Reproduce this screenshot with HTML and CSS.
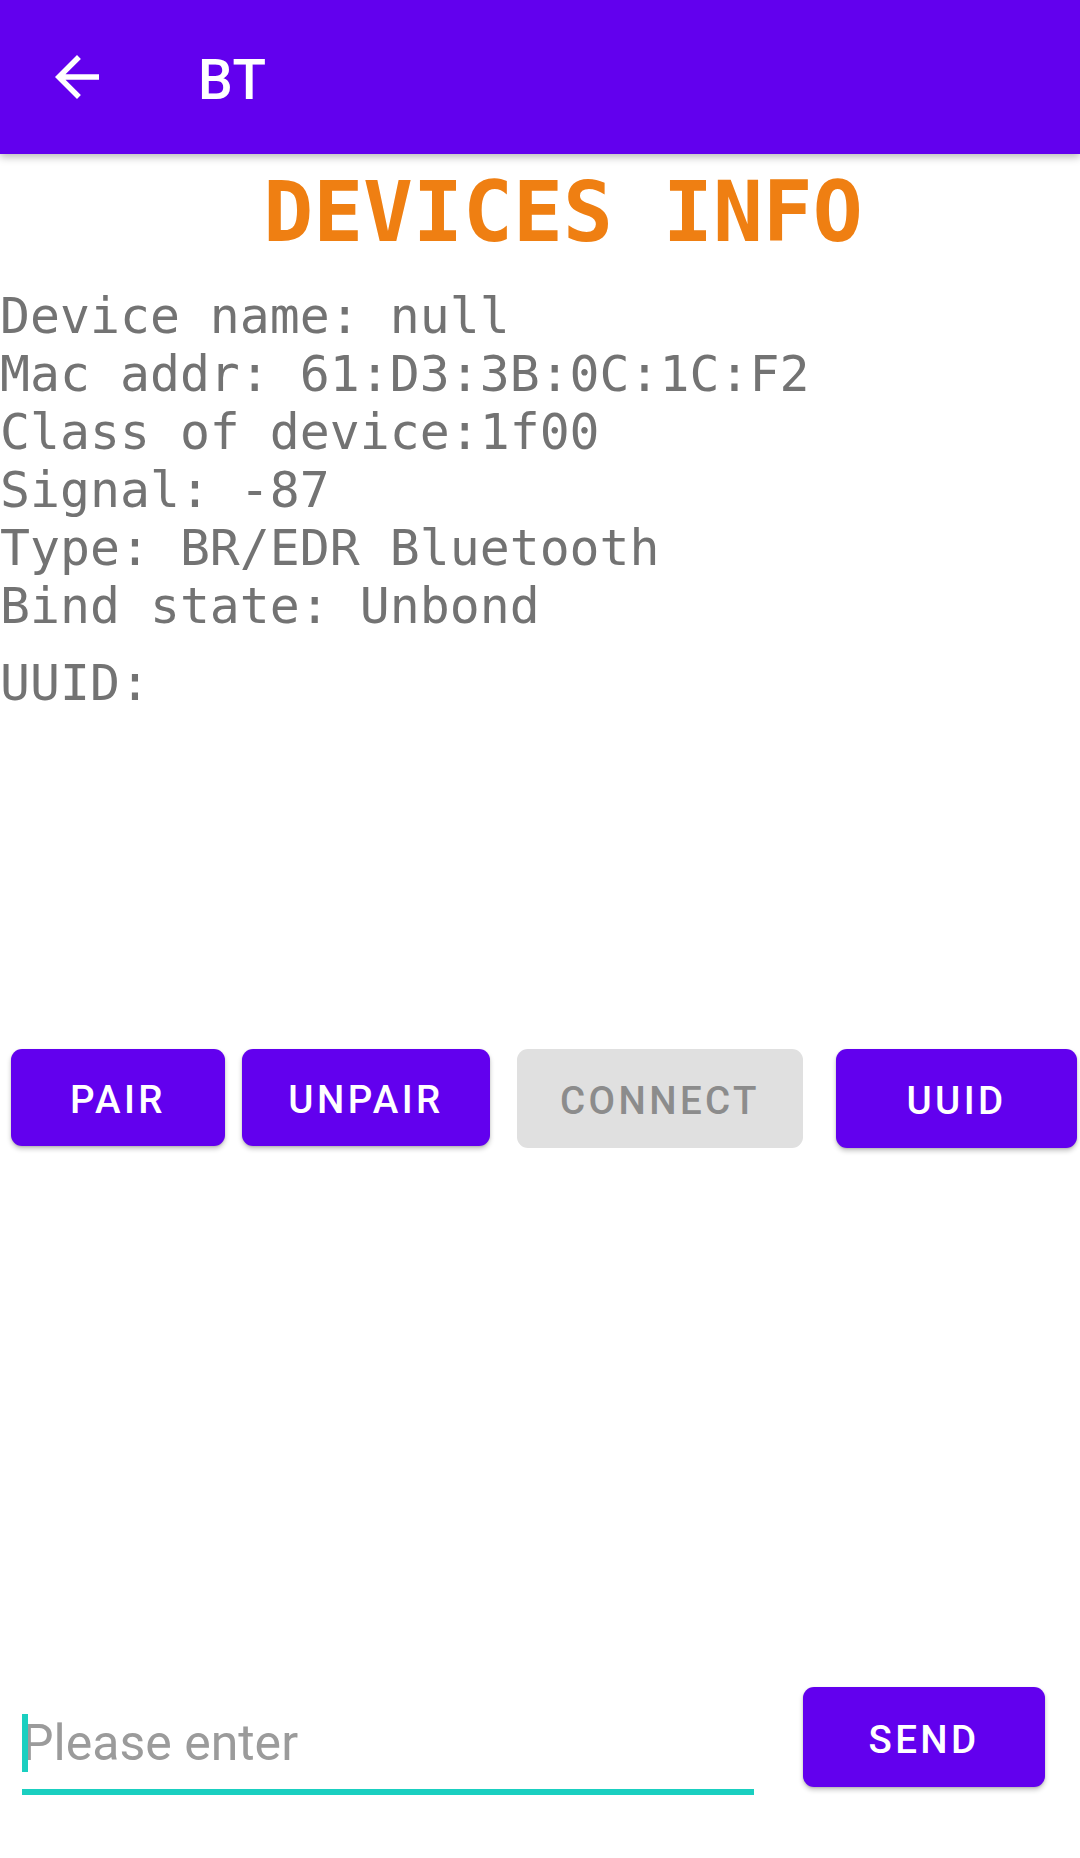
FILE: index.html
```html
<!DOCTYPE html>
<html lang="en">
<head>
<meta charset="utf-8">
<title>BT</title>
<link rel="stylesheet" href="styles.css">
</head>
<body>
<header class="appbar">
  <span class="nav-icon">
    <svg viewBox="0 0 24 24" width="66" height="66"><path fill="#fff" d="M20 11H7.83l5.59-5.59L12 4l-8 8 8 8 1.41-1.41L7.83 13H20v-2z"/></svg>
  </span>
  <span class="appbar-title">BT</span>
</header>
<main class="content">
  <h1 class="heading">DEVICES INFO</h1>
  <div class="info">
    <div class="line">Device name: null</div>
    <div class="line">Mac addr: 61:D3:3B:0C:1C:F2</div>
    <div class="line">Class of device:1f00</div>
    <div class="line">Signal: -87</div>
    <div class="line">Type: BR/EDR Bluetooth</div>
    <div class="line">Bind state: Unbond</div>
  </div>
  <div class="uuid">UUID:</div>
  <div class="actions">
    <button class="btn btn-pair">PAIR</button>
    <button class="btn btn-unpair">UNPAIR</button>
    <button class="btn btn-connect" disabled>CONNECT</button>
    <button class="btn btn-uuid">UUID</button>
  </div>
  <div class="composer">
    <div class="field">
      <span class="cursor"></span>
      <span class="hint">Please enter</span>
    </div>
    <button class="btn btn-send">SEND</button>
  </div>
</main>
</body>
</html>
```
FILE: styles.css
```css
html, body {
  margin: 0;
  padding: 0;
  background: #ffffff;
}
body {
  width: 1080px;
  height: 1858px;
  overflow: hidden;
  font-family: Roboto, "Noto Sans", sans-serif;
}
.appbar {
  position: relative;
  z-index: 2;
  height: 154px;
  background: #6200ee;
  display: flex;
  align-items: center;
  box-shadow: 0 3px 8px rgba(0, 0, 0, 0.28);
}
.nav-icon {
  width: 66px;
  height: 66px;
  margin-left: 44px;
  display: flex;
}
.appbar-title {
  margin-left: 88px;
  padding-top: 6px;
  color: #ffffff;
  font-family: Roboto, sans-serif;
  font-weight: 500;
  font-size: 55px;
  letter-spacing: 0.5px;
}
.content {
  display: flex;
  flex-direction: column;
}
.heading {
  margin: 17px 0 0 0;
  padding-left: 46px;
  text-align: center;
  font-family: "DejaVu Sans Mono", monospace;
  font-weight: bold;
  font-size: 83px;
  line-height: 84px;
  color: #ef7f12;
}
.info, .uuid {
  font-family: "DejaVu Sans Mono", monospace;
  font-size: 49.8px;
  line-height: 58px;
  color: #737373;
}
.line, .uuid {
  white-space: pre;
}
.info {
  margin-top: 32px;
}
.uuid {
  margin-top: 19px;
}
.actions {
  margin-top: 337px;
  display: flex;
  align-items: flex-start;
  padding-left: 11px;
}
.btn {
  border: 0;
  border-radius: 11px;
  background: #6200ee;
  color: #ffffff;
  font-family: Roboto, sans-serif;
  font-weight: 500;
  font-size: 38.5px;
  letter-spacing: 3.4px;
  padding: 4px 0 0 0;
  box-shadow: 0 3px 5px rgba(0, 0, 0, 0.22), 0 1px 2px rgba(0, 0, 0, 0.12);
}
.btn-pair { width: 214px; height: 97px; }
.btn-unpair { width: 248px; height: 97px; margin-left: 17px; }
.btn-connect {
  width: 286px;
  height: 99px;
  margin-left: 27px;
  background: #e0e0e0;
  color: #8c8c8c;
  box-shadow: none;
}
.btn-uuid { width: 241px; height: 99px; margin-left: 33px; }
.composer {
  margin-top: 539px;
  display: flex;
  align-items: flex-start;
}
.field {
  position: relative;
  margin-left: 22px;
  width: 732px;
  height: 75px;
  padding-top: 27px;
  border-bottom: 6px solid #1acfc0;
}
.cursor {
  position: absolute;
  left: 0;
  top: 27px;
  width: 6px;
  height: 58px;
  background: #1acfc0;
}
.hint {
  display: block;
  font-family: Roboto, sans-serif;
  font-size: 50px;
  line-height: 58px;
  color: #9b9b9b;
}
.btn-send {
  width: 242px;
  height: 100px;
  margin-left: 49px;
}
```
